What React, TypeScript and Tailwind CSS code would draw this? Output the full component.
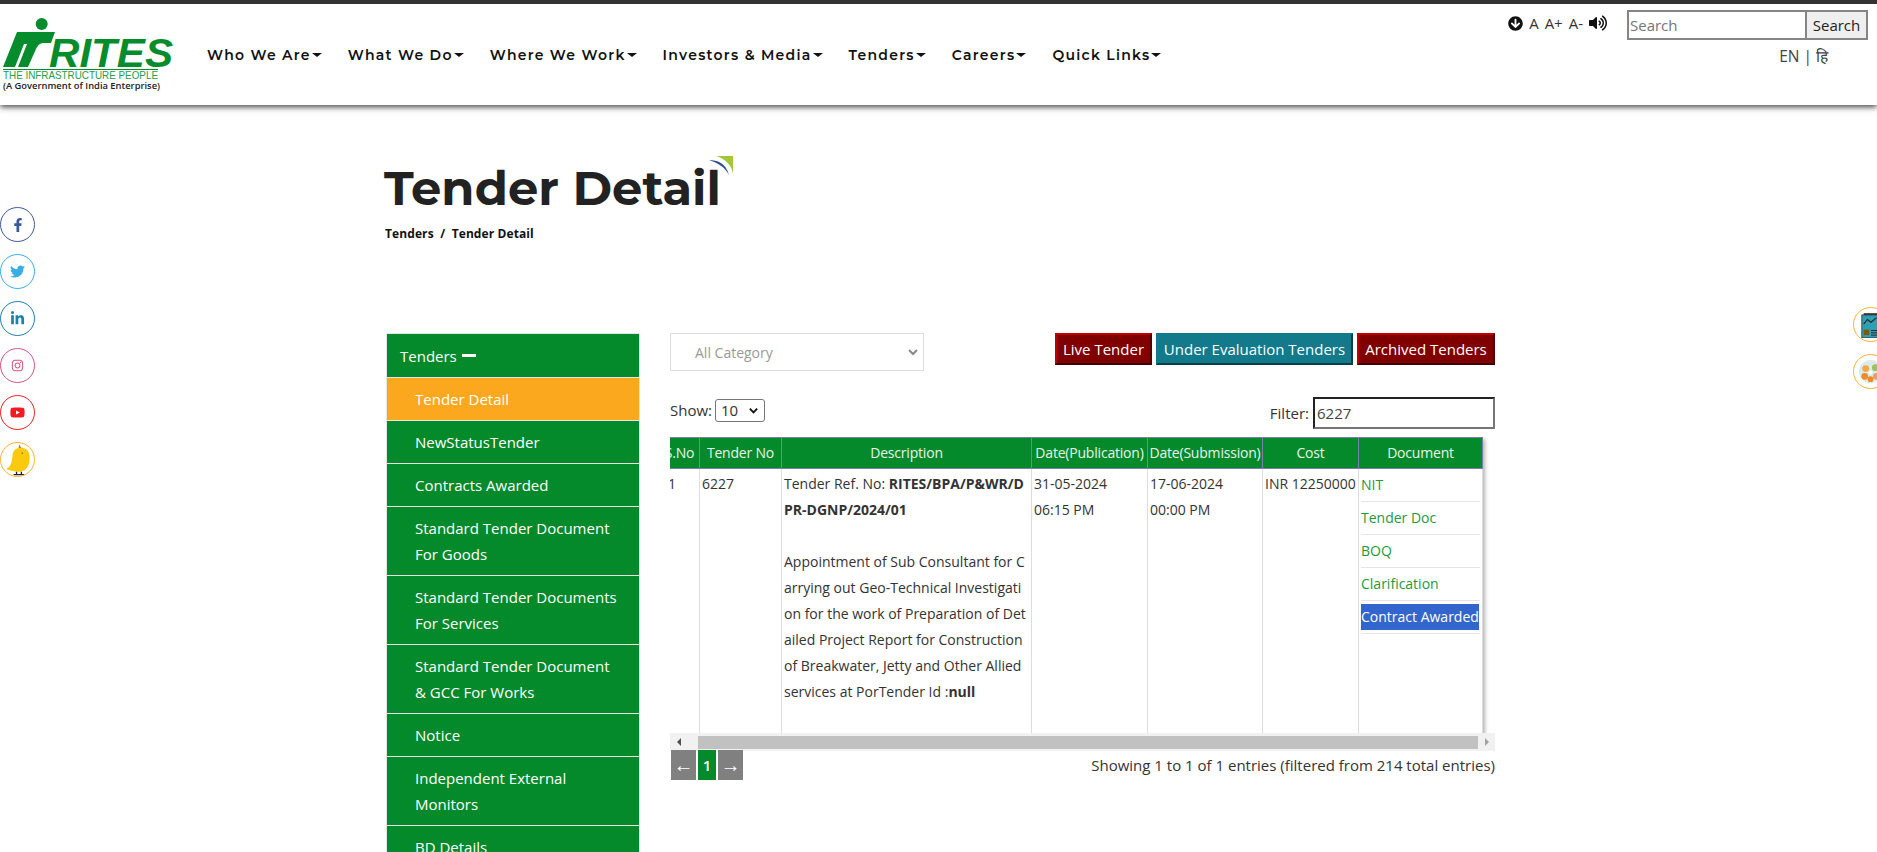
import { FaArrowCircleDown, FaFacebookF, FaInstagram, FaLinkedinIn, FaTwitter, FaVolumeUp, FaYoutube } from "react-icons/fa";

const navItems = ["Who We Are", "What We Do", "Where We Work", "Investors & Media", "Tenders", "Careers", "Quick Links"];

const sideItems = [
    { label: "Tender Detail", active: true },
    { label: "NewStatusTender" },
    { label: "Contracts Awarded" },
    { label: "Standard Tender Document For Goods" },
    { label: "Standard Tender Documents For Services" },
    { label: "Standard Tender Document & GCC For Works" },
    { label: "Notice" },
    { label: "Independent External Monitors" },
    { label: "BD Details" },
];

const docs = ["NIT", "Tender Doc", "BOQ", "Clarification"];

function Logo() {
    return (
        <svg width="172" height="76" viewBox="0 0 172 76" className="shrink-0">
            <circle cx="38.7" cy="6" r="6" fill="#058c2c" />
            <path d="M14 14 H52 L48 25 H41 C37 25 35 27 33 31 L25 49 H15 L24 26 H21 L12 49 H0 Z" fill="#058c2c" />
            <text x="46" y="49" textLength="124" lengthAdjust="spacingAndGlyphs" fill="#058c2c" fontFamily="'Liberation Sans', sans-serif" fontWeight="700" fontStyle="italic" fontSize="40">RITES</text>
            <rect x="0" y="51" width="155" height="1" fill="#058c2c" />
            <text x="0" y="61" textLength="155" lengthAdjust="spacingAndGlyphs" fill="#22a04a" fontFamily="'Liberation Sans', sans-serif" fontSize="11">THE INFRASTRUCTURE PEOPLE</text>
            <text x="0" y="71" textLength="157" lengthAdjust="spacingAndGlyphs" fill="#222" fontFamily="'Open Sans', sans-serif" fontWeight="600" fontSize="9.5">(A Government of India Enterprise)</text>
        </svg>
    );
}

function Koo() {
    return (
        <svg viewBox="0 0 34 34" className="w-[34px] h-[34px]">
            <path d="M18 5 L19 1 L21 5 Z" fill="#a67c00" />
            <path d="M12 12 C12 2 28 2 29 11 C31 20 27 29 19 29 C14 29 9 28 5 26 C9 25 11 21 12 12 Z" fill="#fbc90d" />
            <path d="M16 29 V32 M21 29 V32 M13 32 H18 M18 32 H24" stroke="#222" strokeWidth="1.4" fill="none" />
            <circle cx="22" cy="10" r="0.8" fill="#8a6d00" />
        </svg>
    );
}

function SocialRail() {
    const circle = "w-[35px] h-[35px] rounded-full border bg-white flex items-center justify-center";
    return (
        <div className="fixed left-0 top-[207px] flex flex-col gap-[12px]">
            <div className={`${circle} border-[#3b5998] text-[#3b5998] text-[14px]`}><FaFacebookF /></div>
            <div className={`${circle} border-[#39aee3] text-[#39aee3] text-[15px]`}><FaTwitter /></div>
            <div className={`${circle} border-[#1b7fb0] text-[#1b7fb0] text-[15px]`}><FaLinkedinIn /></div>
            <div className={`${circle} border-[#d6537c] text-[#d6537c] text-[13px]`}><FaInstagram /></div>
            <div className={`${circle} border-[#f01c24] text-[#f01c24] text-[15px]`}><FaYoutube /></div>
            <div className={`${circle} border-[#f9b233] overflow-hidden`}><Koo /></div>
        </div>
    );
}

function RightRail() {
    const circle = "w-[35px] h-[35px] rounded-full border border-[#f9b233] bg-white flex items-center justify-center";
    return (
        <div className="fixed right-[-11px] top-[307px] flex flex-col gap-[12px]">
            <div className={circle}>
                <svg viewBox="0 0 24 28" className="w-[22px] h-[26px]">
                    <rect x="4" y="1" width="19" height="25" fill="#444" />
                    <rect x="2" y="3" width="19" height="25" fill="#2f9fb3" stroke="#222" strokeWidth="0.8" />
                    <path d="M4 13 L8 8 L12 11 L18 6" stroke="#222" strokeWidth="1.2" fill="none" />
                    <rect x="4" y="19" width="6" height="6" fill="#7a5a12" />
                    <path d="M12 20 H19 M12 22.5 H19 M12 25 H19" stroke="#222" strokeWidth="1" />
                </svg>
            </div>
            <div className={circle}>
                <svg viewBox="0 0 26 26" className="w-[25px] h-[25px]">
                    <circle cx="13" cy="13" r="12" fill="#d9eceb" />
                    <circle cx="8" cy="10" r="3.5" fill="#f4a640" />
                    <circle cx="18" cy="9" r="3.5" fill="#9cc25b" />
                    <circle cx="7" cy="18" r="3.5" fill="#f08a24" />
                    <circle cx="19" cy="18" r="3.5" fill="#e9a05d" />
                    <circle cx="13" cy="21" r="3" fill="#f08a24" />
                    <circle cx="13" cy="14" r="2" fill="#fff" />
                </svg>
            </div>
        </div>
    );
}

function Header() {
    return (
        <header className="h-[105px] bg-white border-t-[4px] border-[#333] shadow-[0_2px_6px_rgba(0,0,0,0.75)] flex relative">
            <div className="pl-[3px] pt-[14px]"><Logo /></div>
            <nav className="flex gap-[26px] ml-[32px] mt-[44px] h-[14px] items-center font-['Montserrat','Inter',sans-serif] text-[14px] font-semibold tracking-[1.27px] text-[#111] whitespace-nowrap">
                {navItems.map((item) => (
                    <a key={item} className="flex items-center">
                        {item}
                        <span className="ml-[1px] w-0 h-0 border-x-[5px] border-x-transparent border-t-[4px] border-t-[#111]" />
                    </a>
                ))}
            </nav>
            <div className="ml-auto pr-[9px] pt-[6px] flex flex-col">
                <div className="flex items-start">
                    <div className="flex items-center gap-[6px] mr-[20px] mt-[3px] h-[20px] text-[15px] text-[#333]">
                        <FaArrowCircleDown className="text-[15px] text-[#111]" />
                        <span>A</span>
                        <span>A+</span>
                        <span>A-</span>
                        <FaVolumeUp className="text-[18px] text-[#111]" />
                    </div>
                    <input readOnly placeholder="Search" className="w-[180px] h-[30px] border-2 border-[#858585] px-[1px] text-[15px] outline-none placeholder:text-[#757575]" />
                    <div className="w-[61px] h-[30px] border-2 border-l-0 border-[#858585] bg-[#efefef] text-[15px] text-[#222] flex items-center justify-center">Search</div>
                </div>
                <div className="self-end mr-[40px] mt-[5px] text-[15.5px] text-[#444] whitespace-nowrap">EN | हि</div>
            </div>
        </header>
    );
}

function Sidebar() {
    return (
        <aside className="w-[254px] shrink-0 border border-[#e5e5e5] text-[15px] text-white leading-[26px]">
            <div className="bg-[#058a2b] h-[43px] pl-[13px] flex items-center">
                Tenders
                <span className="ml-[5px] w-[14px] h-[3px] bg-white" />
            </div>
            {sideItems.map((item) => (
                <div key={item.label} className={`${item.active ? "bg-[#fba81f]" : "bg-[#058a2b]"} border-t border-[#e5e5e5] pl-[28px] pr-[20px] py-[8px]`}>
                    {item.label}
                </div>
            ))}
        </aside>
    );
}

function TenderTable() {
    const th = "border-x border-[#7a7fb0] font-normal px-[1px] tracking-[-0.2px]";
    const td = "border-x border-[#ddd] align-top px-[2px]";
    return (
        <div className="mt-[8px] relative">
            <div className="overflow-hidden h-[296px] w-[825px]">
                <table className="table-fixed border-collapse -ml-[11px] w-[823px] text-[14px] leading-[26px] text-[#333] shadow-[2px_2px_4px_rgba(0,0,0,0.3)]">
                    <colgroup>
                        <col className="w-[40px]" />
                        <col className="w-[82px]" />
                        <col className="w-[250px]" />
                        <col className="w-[116px]" />
                        <col className="w-[115px]" />
                        <col className="w-[96px]" />
                        <col className="w-[124px]" />
                    </colgroup>
                    <thead>
                        <tr className="bg-[#058a2b] text-[#e6f4ea] h-[31px] border-y border-[#7a7fb0] whitespace-nowrap">
                            <th className={th}>S.No</th>
                            <th className={th}>Tender No</th>
                            <th className={th}>Description</th>
                            <th className={th}>Date(Publication)</th>
                            <th className={th}>Date(Submission)</th>
                            <th className={th}>Cost</th>
                            <th className={th}>Document</th>
                        </tr>
                    </thead>
                    <tbody>
                        <tr className="h-[265px]">
                            <td className={`${td} pt-[2px] pl-[8px]`}>1</td>
                            <td className={`${td} pt-[2px]`}>6227</td>
                            <td className={`${td} pt-[2px] break-all`}>
                                Tender Ref. No: <b>RITES/BPA/P&amp;WR/DPR-DGNP/2024/01</b>
                                <br />
                                <br />
                                Appointment of Sub Consultant for Carrying out Geo-Technical Investigation for the work of Preparation of Detailed Project Report for Construction of Breakwater, Jetty and Other Allied services at PorTender Id :<b>null</b>
                            </td>
                            <td className={`${td} pt-[2px]`}>31-05-2024<br />06:15 PM</td>
                            <td className={`${td} pt-[2px]`}>17-06-2024<br />00:00 PM</td>
                            <td className={`${td} pt-[2px] whitespace-nowrap`}>INR 12250000</td>
                            <td className={td}>
                                {docs.map((d) => (
                                    <div key={d} className="h-[33px] pt-[3px] border-b border-[#e5e5e5] text-[#1b9a41] whitespace-nowrap">{d}</div>
                                ))}
                                <div className="h-[33px] pt-[3px] border-b border-[#e5e5e5]">
                                    <div className="bg-[#3366cc] text-white h-[26px] w-[118px] whitespace-nowrap">Contract Awarded</div>
                                </div>
                            </td>
                        </tr>
                    </tbody>
                </table>
            </div>
            <div className="w-[825px] h-[18px] bg-[#f1f1f1] flex items-center">
                <span className="w-[17px] flex justify-center"><span className="w-0 h-0 border-y-[4px] border-y-transparent border-r-[4px] border-r-[#505050]" /></span>
                <span className="w-[780px] h-[13px] ml-[11px] bg-[#c1c1c1]" />
                <span className="w-[17px] flex justify-center"><span className="w-0 h-0 border-y-[4px] border-y-transparent border-l-[4px] border-l-[#a3a3a3]" /></span>
            </div>
            <div className="w-[825px] flex justify-between text-[15px] text-[#333]">
                <div className="flex gap-[2px] -mt-[1px] ml-[1px] text-white text-[20px] leading-none">
                    <span className="w-[25px] h-[30px] bg-[#808080] flex items-center justify-center">←</span>
                    <span className="w-[18px] h-[30px] bg-[#058a2b] flex items-center justify-center text-[15px] font-semibold">1</span>
                    <span className="w-[25px] h-[30px] bg-[#808080] flex items-center justify-center">→</span>
                </div>
                <div className="mt-[3px]">Showing 1 to 1 of 1 entries (filtered from 214 total entries)</div>
            </div>
        </div>
    );
}

export default function App() {
    return (
        <div className="h-[852px] overflow-hidden bg-white font-['Open_Sans',sans-serif]">
            <Header />
            <SocialRail />
            <RightRail />
            <main className="pl-[386px]">
                <div className="relative w-fit mt-[58px] h-[50px]">
                    <h1 className="font-['Montserrat','Inter',sans-serif] text-[48px] leading-[50px] font-bold text-[#222] whitespace-nowrap -ml-[2px]">Tender Detail</h1>
                    <svg viewBox="0 0 24 20" className="absolute -right-[12px] -top-[8px] w-[24px] h-[20px]">
                        <path d="M7 1 H24 V19 C23 11 17 4 7 1 Z" fill="#a4c639" />
                        <path d="M0 5 C8 5 17 8 20 20 C16 12 9 8 0 5 Z" fill="#2b4c9b" />
                    </svg>
                </div>
                <div className="mt-[13px] text-[12px] leading-[16px] font-bold tracking-[0.1px] text-[#111] -ml-[1px] whitespace-pre">Tenders  /  Tender Detail</div>
                <div className="flex mt-[91px]">
                    <Sidebar />
                    <section className="ml-[30px] w-[825px]">
                        <div className="flex justify-between items-start">
                            <div className="w-[254px] h-[38px] border border-[#ddd] flex items-center justify-between pl-[24px] pr-[4px] text-[14px] text-[#999]">
                                All Category
                                <svg viewBox="0 0 12 12" className="w-[12px] h-[12px]"><path d="M2 4 L6 8 L10 4" stroke="#888" strokeWidth="2" fill="none" /></svg>
                            </div>
                            <div className="flex gap-[4px] text-[15px] text-white">
                                <span className="h-[32px] w-[97px] flex items-center justify-center bg-[#800000] border-2 border-t-[#c00000] border-l-[#c00000] border-b-[#400000] border-r-[#500000]">Live Tender</span>
                                <span className="h-[32px] w-[197px] flex items-center justify-center bg-[#137a8b] border-2 border-t-[#137a8b] border-l-[#137a8b] border-b-[#0a3f48] border-r-[#0a3f48]">Under Evaluation Tenders</span>
                                <span className="h-[32px] w-[138px] flex items-center justify-center bg-[#800000] border-2 border-t-[#c00000] border-l-[#c00000] border-b-[#400000] border-r-[#500000]">Archived Tenders</span>
                            </div>
                        </div>
                        <div className="flex justify-between items-center mt-[26px] h-[32px] text-[15px] text-[#333]">
                            <div className="flex items-center gap-[3px] -mt-[5px]">
                                Show:
                                <div className="w-[50px] h-[23px] border border-[#767676] rounded-[3px] flex items-center justify-between pl-[5px] pr-[5px]">
                                    10
                                    <svg viewBox="0 0 12 12" className="w-[11px] h-[11px]"><path d="M2 4 L6 8 L10 4" stroke="#111" strokeWidth="2" fill="none" /></svg>
                                </div>
                            </div>
                            <div className="flex items-center gap-[4px]">
                                Filter:
                                <input readOnly value="6227" className="w-[182px] h-[32px] border-2 border-t-[#222] border-l-[#222] border-r-[#767676] border-b-[#767676] px-[2px] text-[15px] text-[#444] outline-none" />
                            </div>
                        </div>
                        <TenderTable />
                    </section>
                </div>
            </main>
        </div>
    );
}
